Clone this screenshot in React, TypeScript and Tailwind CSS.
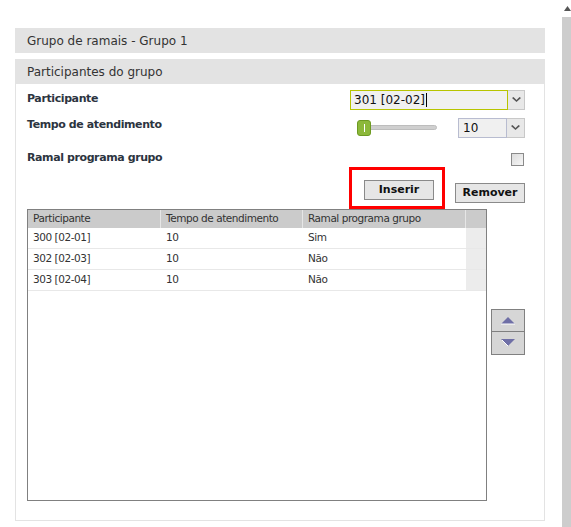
import React from "react";

const rows = [
  ["300 [02-01]", "10", "Sim"],
  ["302 [02-03]", "10", "Não"],
  ["303 [02-04]", "10", "Não"],
];

function Arrow() {
  return (
    <svg width="9" height="6" viewBox="0 0 9 6">
      <path d="M0 1 L4.5 5 L9 1 L7.5 0 L4.5 3 L1.5 0 Z" fill="#555" />
    </svg>
  );
}

export default function App() {
  return (
    <div
      className="relative w-[571px] h-[527px] bg-white flex overflow-hidden text-[#2c3440]"
      style={{ fontFamily: '"DejaVu Sans", Verdana, sans-serif' }}
    >
      <div className="w-[562px] pt-[28px] pl-[15px] pr-[17px]">
        <div className="h-[25px] bg-[#e3e3e3] pl-[12px] flex items-center text-[12px] text-[#333]">
          Grupo de ramais - Grupo 1
        </div>
        <div className="mt-[6px] h-[25px] bg-[#e3e3e3] pl-[12px] flex items-center text-[12px] text-[#333]">
          Participantes do grupo
        </div>
        <div className="border border-t-0 border-[#e3e3e3] h-[437px] pl-[11px] pr-[19px]">
          <div className="flex items-center h-[30px] justify-between pt-[1px]">
            <span className="font-bold text-[11px] tracking-[-0.4px]">Participante</span>
            <div className="flex h-[20px] w-[175px]">
              <div className="flex-1 border border-[#b7c400] bg-[#f0f0f0] flex items-center pl-[3px] text-[12px] text-[#111]">
                301 [02-02]<span className="w-px h-[14px] bg-black ml-px" />
              </div>
              <div className="w-[17px] border border-[#c8c8c8] border-l-0 bg-[#e8e8e8] flex items-center justify-center">
                <Arrow />
              </div>
            </div>
          </div>
          <div className="flex items-center h-[27px] justify-between">
            <span className="self-start mt-[4px] leading-[13px] font-bold text-[11px] tracking-[-0.4px]">
              Tempo de atendimento
            </span>
            <div className="flex items-center">
              <div className="relative w-[80px] h-[16px] flex items-center">
                <div className="w-full h-[5px] rounded bg-[#cfcfcf] border border-[#bdbdbd]" />
                <div className="absolute left-0 top-0 w-[14px] h-[16px] rounded-[3px] bg-[#8cb83a] border border-[#6d9a22] flex items-center justify-center">
                  <div className="w-px h-[8px] bg-white" />
                </div>
              </div>
              <div className="ml-[21px] flex h-[20px] w-[67px]">
                <div className="flex-1 border border-[#b8bcd0] bg-[#f0f0f0] flex items-center pl-[4px] text-[12px] text-[#111]">
                  10
                </div>
                <div className="w-[18px] border border-[#c8c8c8] border-l-0 bg-[#e8e8e8] flex items-center justify-center">
                  <Arrow />
                </div>
              </div>
            </div>
          </div>
          <div className="flex items-start justify-between mt-[10px] h-[16px]">
            <span className="leading-[13px] font-bold text-[11px] tracking-[-0.4px]">Ramal programa grupo</span>
            <div className="mt-[2px] w-[13px] h-[13px] border border-[#8a8a8a] bg-gradient-to-br from-[#dcdcdc] to-[#f6f6f6] mr-px" />
          </div>
          <div className="flex justify-end items-center h-[42px]">
            <div className="w-[96px] h-[42px] border-[3px] border-[#ff0000] flex items-end justify-end pb-[6px] pr-[8px]">
              <button className="w-[70px] h-[20px] border border-[#8a8a8a] bg-[#e6e6e6] text-[11px] font-bold text-[#111]">
                Inserir
              </button>
            </div>
            <button className="ml-[10px] self-end mb-[6px] w-[70px] h-[20px] border border-[#8a8a8a] bg-[#e6e6e6] text-[11px] font-bold text-[#111]">
              Remover
            </button>
          </div>
          <div className="flex">
            <div className="w-[461px] h-[292px] border border-[#808080] bg-white text-[10.5px] tracking-[-0.45px] text-[#333]">
              <div className="flex h-[18px] bg-[#cbcbcb]">
                <div className="w-[133px] pl-[5px] flex items-center border-r border-[#e6e6e6]">Participante</div>
                <div className="w-[142px] pl-[5px] flex items-center border-r border-[#e6e6e6]">Tempo de atendimento</div>
                <div className="w-[163px] pl-[5px] flex items-center border-r border-[#e6e6e6]">Ramal programa grupo</div>
                <div className="flex-1" />
              </div>
              {rows.map((r) => (
                <div key={r[0]} className="flex h-[21px] border-b border-[#e8e8e8]">
                  <div className="w-[133px] pl-[5px] flex items-center">{r[0]}</div>
                  <div className="w-[142px] pl-[5px] flex items-center">{r[1]}</div>
                  <div className="w-[163px] pl-[5px] flex items-center">{r[2]}</div>
                  <div className="flex-1 bg-[#ececec]" />
                </div>
              ))}
            </div>
            <div className="ml-[4px] mt-[100px] flex flex-col">
              <div className="w-[34px] h-[23px] border border-[#808080] bg-[#d6d6d6] flex items-center justify-center">
                <svg width="14" height="8" viewBox="0 0 14 8">
                  <path d="M7 0 L14 7 L0 7 Z" fill="#6f6fa6" />
                  <path d="M0 7 L14 7" stroke="#fff" strokeWidth="1" />
                </svg>
              </div>
              <div className="w-[34px] h-[23px] border border-t-0 border-[#808080] bg-[#d6d6d6] flex items-center justify-center">
                <svg width="14" height="8" viewBox="0 0 14 8">
                  <path d="M0 0 L14 0 L7 7 Z" fill="#6f6fa6" />
                  <path d="M1 1 L7 7" stroke="#fff" strokeWidth="1" />
                </svg>
              </div>
            </div>
          </div>
        </div>
      </div>
      <div className="w-[9px] flex flex-col">
        <div className="h-[17px] bg-white flex items-start justify-end pt-[6px]">
          <svg width="7" height="5" viewBox="0 0 7 5">
            <path d="M0 5 L3.5 0 L7 5 Z" fill="#555" />
          </svg>
        </div>
        <div className="flex-1 bg-[#cdcdcd]" />
      </div>
    </div>
  );
}
